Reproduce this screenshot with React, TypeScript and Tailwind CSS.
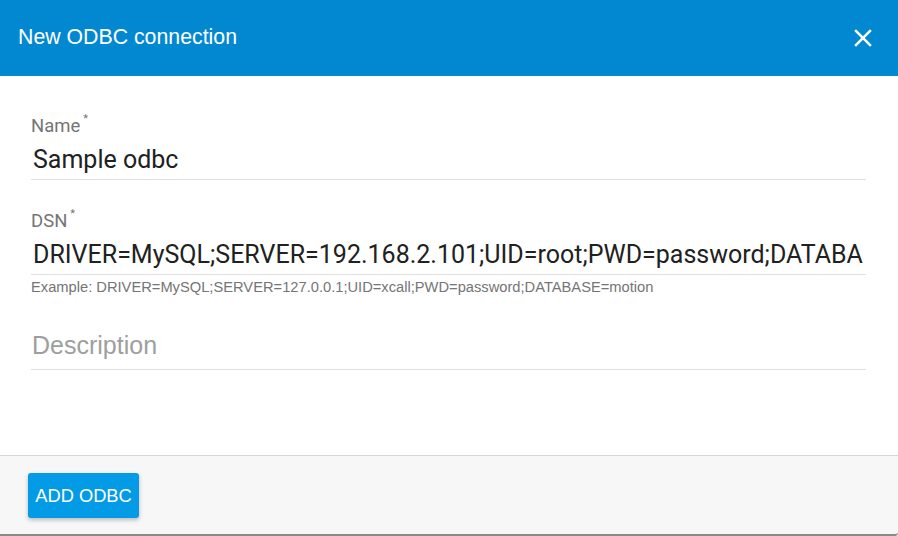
import React from "react";

export default function App() {
  return (
    <div className="w-[898px] h-[536px] flex flex-col bg-white overflow-hidden">
      <div className="h-[76px] shrink-0 bg-[#0288d1] flex items-center justify-between pl-[18px] pr-[20px]">
        <span className="text-white text-[21.3px] font-['Liberation_Sans',sans-serif] leading-none">New ODBC connection</span>
        <svg width="30" height="30" viewBox="0 0 24 24" className="text-white mt-[-1px]">
          <path d="M19 6.41 17.59 5 12 10.59 6.41 5 5 6.41 10.59 12 5 17.59 6.41 19 12 13.41 17.59 19 19 17.59 13.41 12z" fill="currentColor" />
        </svg>
      </div>
      <div className="flex-1 pl-[31px] pr-[32px] pt-[39px] font-['Roboto',sans-serif]">
        <div className="flex flex-col">
          <label className="text-[#757575] text-[18.5px] leading-[22px] flex items-start">
            Name<span className="text-[11px] leading-none ml-[3px] mt-[-2px]">*</span>
          </label>
          <input
            readOnly
            value="Sample odbc"
            className="h-[43px] w-full bg-transparent outline-none border-b border-[#e0e0e0] pl-[2px] pt-[3px] text-[#212121] text-[25px] font-['Roboto',sans-serif]"
          />
        </div>
        <div className="flex flex-col mt-[30px]">
          <label className="text-[#757575] text-[18.5px] leading-[22px] flex items-start">
            DSN<span className="text-[11px] leading-none ml-[3px] mt-[-2px]">*</span>
          </label>
          <input
            readOnly
            value="DRIVER=MySQL;SERVER=192.168.2.101;UID=root;PWD=password;DATABASE=motion"
            className="h-[43px] w-full bg-transparent outline-none border-b border-[#e0e0e0] pl-[2px] pr-[3px] pt-[3px] text-[#212121] text-[25px] font-['Roboto',sans-serif]"
          />
          <div className="text-[#757575] text-[14.7px] leading-[17px] mt-[4px] font-['Liberation_Sans',sans-serif]">
            Example: DRIVER=MySQL;SERVER=127.0.0.1;UID=xcall;PWD=password;DATABASE=motion
          </div>
        </div>
        <input
          readOnly
          placeholder="Description"
          className="mt-[32px] h-[42px] w-full bg-transparent outline-none border-b border-[#e0e0e0] pl-[1px] pb-[6px] text-[25px] font-['Liberation_Sans',sans-serif] placeholder:text-[#9e9e9e]"
        />
      </div>
      <div className="h-[81px] shrink-0 bg-[#f7f7f7] border-t border-[#d6d6d6] border-b-2 border-b-[#8a8a8a] rounded-br-[3px] px-[28px] pt-[17px]">
        <button className="h-[45px] w-[111px] rounded-[3px] bg-[#039be5] text-white text-[18.3px] font-['Liberation_Sans',sans-serif] shadow-[0_2px_4px_rgba(0,0,0,0.25)]">
          ADD ODBC
        </button>
      </div>
    </div>
  );
}
